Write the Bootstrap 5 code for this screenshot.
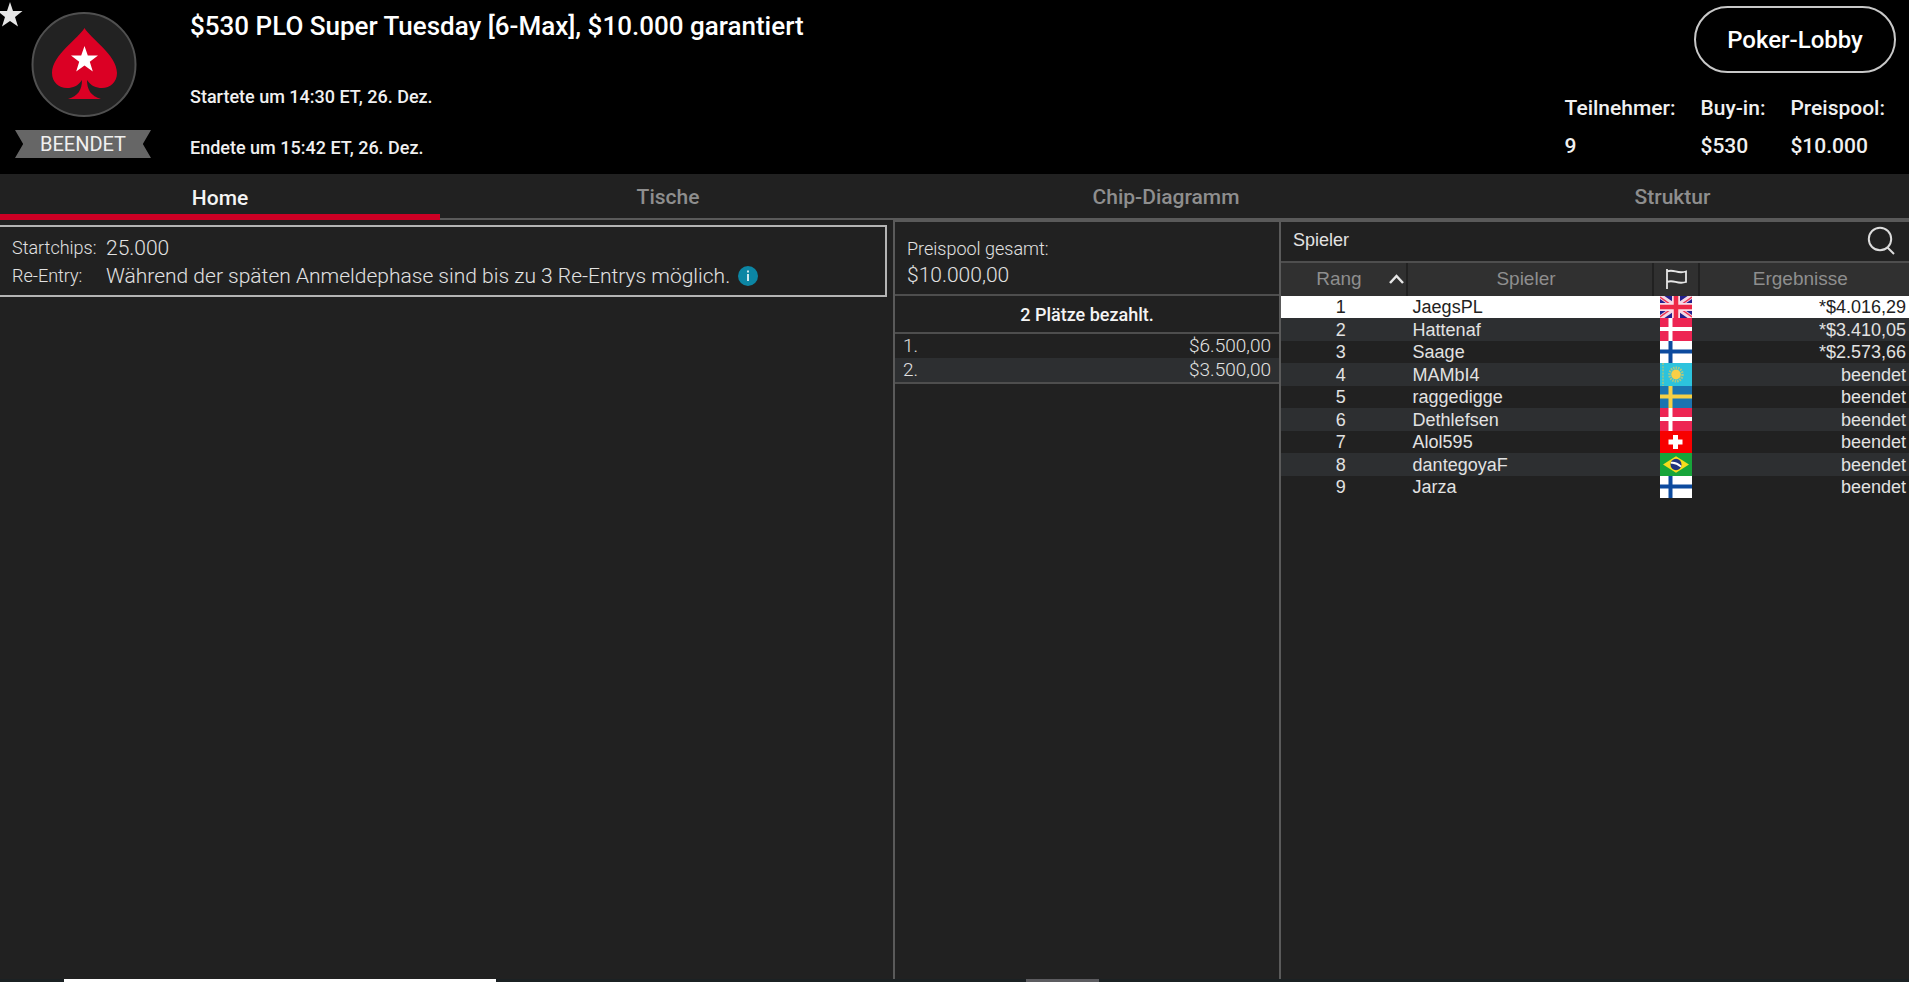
<!DOCTYPE html>
<html lang="de">
<head>
<meta charset="utf-8">
<meta name="viewport" content="width=device-width, initial-scale=1">
<title>Turnierlobby</title>
<link href="https://cdn.jsdelivr.net/npm/bootstrap@5.3.0/dist/css/bootstrap.min.css" rel="stylesheet">
<style>
  body { background: #212121; color: #e2e2e2; font-family: Roboto, sans-serif; }
  svg { display: block; }
  .lobby-head { background: #000; min-height: 174px; }
  .brand { width: 190px; padding: 12px 38px 0 15px; }
  .fav { position: absolute; left: -2px; top: 1px; background: none; }
  .ribbon { width: 136px; height: 28px; line-height: 28px; margin-top: 13px; background: #666;
    clip-path: polygon(0 0, 100% 0, 94% 50%, 100% 100%, 0 100%, 6% 50%); font-size: 20px; color: #f0f0f0; }
  .headline { font-size: 26px; font-weight: 500; line-height: 28px; color: #fff; padding-top: 12px; }
  .times { font-size: 18px; line-height: 24px; font-weight: 500; color: #f0f0f0; }
  .times-start { margin-top: 45px; }
  .times-end { margin-top: 27px; }
  .lobby-btn { width: 202px; height: 67px; margin: 6px 13px 0 0; border: 2px solid #c8c8c8; color: #fff; font-size: 24px; font-weight: 500; }
  .lobby-btn:hover { background: #222; color: #fff; }
  .stats { font-size: 21px; font-weight: 500; line-height: 24px; gap: 25px; margin: 23px 24px 0 0; color: #f0f0f0; }
  .stats dt, .stats dd { font-weight: 500; margin: 0; }
  .stats dd { margin-top: 14px; }
  .tabs { display: grid; grid-template-columns: 440fr 456fr 540fr 473fr; }
  .tabs a { height: 46px; line-height: 46px; border-bottom: 2px solid #5a5a5a; color: #8e8e8e; font-size: 21px; font-weight: 500; }
  .tabs a.active { border-bottom: 6px solid #cd0024; line-height: 48px; color: #f4f4f4; }
  .panels { display: grid; grid-template-columns: 893fr 386fr 630fr; }
  .pane { border-left: 2px solid #5a5a5a; border-top: 2px solid #5a5a5a; }
  .info { margin: 5px 6px 0 0; border: 2px solid #b4b4b4; border-left: 0; padding: 7px 12px 5px;
    font-weight: 300; line-height: 28px; height: 72px; }
  .info dt { width: 94px; font-size: 18px; font-weight: 300; }
  .info dd { font-size: 21px; margin: 0; }
  .pool { font-weight: 300; font-size: 18px; line-height: 27px; padding: 13px 12px 5px; border-bottom: 2px solid #4e4e4e; height: 74px; }
  .pool .sum { font-size: 21px; }
  .paid { font-size: 18px; font-weight: 500; line-height: 37px; height: 38px; border-bottom: 2px solid #4e4e4e; color: #f4f4f4; }
  .prizes { font-size: 19px; font-weight: 300; line-height: 24px; border-bottom: 2px solid #4e4e4e; }
  .prizes td { padding: 0 8px; }
  .prizes tr:nth-child(even) { background: #2d2f31; }
  .arial { font-family: "Liberation Sans", Arial, sans-serif; font-size: 18px; }
  .search-bar { height: 41px; border-bottom: 2px solid #4e4e4e; padding: 0 14px 2px 12px; }
  .players { table-layout: fixed; line-height: 22px; }
  .players th { height: 33px; font-size: 19px; font-weight: 400; color: #8e8e8e; background: #303030; border-right: 2px solid #212121; padding: 0 8px 2px 0; }
  .players th:nth-child(odd) { padding-right: 0; }
  .players th:last-child { border-right: 0; }
  .players td { padding: 0; }
  .players .flag { width: 32px; height: 22px; margin-left: 7px; }
  .players tbody tr { height: 22px; }
  .players tbody tr:nth-child(even) { height: 23px; background: #2d2f31; }
  .players tbody tr:nth-child(even) .flag { height: 23px; }
  .players tbody tr.chosen { background: #fff; color: #222; }
  .players td:first-child { padding-right: 6px; }
  .players td:nth-child(2) { padding-left: 6px; }
  .players td:last-child { padding-right: 3px; }
  .strip { height: 3px; background: #1b2123; display: grid; grid-template-columns: 64fr 432fr 530fr 73fr 810fr; }
</style>
</head>
<body>
<svg width="0" height="0" class="position-absolute" aria-hidden="true">
  <defs>
    <symbol id="dk" viewBox="0 0 32 22" preserveAspectRatio="none"><path fill="#ed2553" d="M0 0h32v22H0z"/><path stroke="#fff" stroke-width="4" d="M10.500 0v22M0 10.500h32"/></symbol>
    <symbol id="fi" viewBox="0 0 32 22" preserveAspectRatio="none"><path fill="#fff" d="M0 0h32v22H0z"/><path stroke="#0c4a9e" stroke-width="4" d="M10.500 0v22M0 10.500h32"/></symbol>
    <symbol id="se" viewBox="0 0 32 22" preserveAspectRatio="none"><path fill="#1b74b0" d="M0 0h32v22H0z"/><path stroke="#f6d044" stroke-width="4" d="M10.500 0v22M0 10.500h32"/></symbol>
    <symbol id="gb" viewBox="0 0 32 22" preserveAspectRatio="none"><path fill="#23208f" d="M0 0h32v22H0z"/><path stroke="#f4d8e4" stroke-width="5" d="M0 0l32 22M32 0L0 22"/><path stroke="#ed3454" stroke-width="1.500" d="M0 1l14 10M18 11l14 10M32 1L18 11M14 11L0 21"/><path stroke="#f8dce6" stroke-width="8" d="M16 0v22M0 11h32"/><path stroke="#ee2846" stroke-width="4.500" d="M16 0v22M0 11h32"/></symbol>
    <symbol id="kz" viewBox="0 0 32 22" preserveAspectRatio="none"><path fill="#2cc3dd" d="M0 0h32v22H0z"/><path stroke="#7fc59a" stroke-width="2" stroke-dasharray="2 1" d="M3 0v22"/><circle cx="16" cy="11" r="6.500" fill="none" stroke="#a9c885" stroke-width="2.500" stroke-dasharray="1.500 1"/><circle cx="16" cy="11" r="4.800" fill="#f9cf45"/></symbol>
    <symbol id="ch" viewBox="0 0 32 22" preserveAspectRatio="none"><path fill="#f80000" d="M0 0h32v22H0z"/><path stroke="#fff" stroke-width="5" d="M15.500 4v14M8.500 11h14"/></symbol>
    <symbol id="br" viewBox="0 0 32 22" preserveAspectRatio="none"><path fill="#17a53a" d="M0 0h32v22H0z"/><path fill="#f5dd1c" d="M16 3l13 8-13 8L3 11z"/><circle cx="16" cy="11" r="5.500" fill="#20357e"/><path d="M11 9.500q5-.8 10 3.500" stroke="#fff" stroke-width="1.800" fill="none"/></symbol>
  </defs>
</svg>
<div class="min-vh-100 d-flex flex-column overflow-hidden position-relative">
  <header class="lobby-head d-flex">
    <button class="fav border-0 p-0" aria-label="Favorit"><svg width="26" height="27" viewBox="0 0 26 27"><path fill="#e6e6e6" d="M12 1l3 9h9.500l-7.500 6 3 9.500-8-5.500-8 5.500 3-9.500-7.500-6H9z"/></svg></button>
    <div class="brand flex-shrink-0">
      <svg class="mx-auto" width="106" height="105" viewBox="0 0 106 105"><circle cx="53" cy="52.500" r="51.500" fill="#222" stroke="#505050" stroke-width="2"/><path fill="#db0024" d="M53.500 16C59 26 86 43 86 61c0 9-7 15-15 15-6 0-11-2-15-8 0 10 4 16 14 19H37c10-3 14-9 14-19-4 6-9 8-15 8-8 0-15-6-15-15 0-18 27-35 32.500-45z"/><path fill="#fff" d="M53.500 34l3.300 9.500h10.200l-8.200 6.200 3 9.800-8.300-6-8.300 6 3-9.800L40 43.500h10.200z"/></svg>
      <div class="ribbon text-center">BEENDET</div>
    </div>
    <div class="flex-grow-1">
      <h1 class="headline m-0">$530 PLO Super Tuesday [6-Max], $10.000 garantiert</h1>
      <p class="times times-start mb-0">Startete um 14:30 ET, 26. Dez.</p>
      <p class="times times-end mb-0">Endete um 15:42 ET, 26. Dez.</p>
    </div>
    <div class="d-flex flex-column align-items-end">
      <button class="btn lobby-btn rounded-pill p-0">Poker-Lobby</button>
      <dl class="stats d-flex">
        <div><dt>Teilnehmer:</dt><dd>9</dd></div>
        <div><dt>Buy-in:</dt><dd>$530</dd></div>
        <div><dt>Preispool:</dt><dd>$10.000</dd></div>
      </dl>
    </div>
  </header>
  <nav class="tabs text-center">
    <a href="#" class="active text-decoration-none">Home</a>
    <a href="#" class="text-decoration-none">Tische</a>
    <a href="#" class="text-decoration-none">Chip-Diagramm</a>
    <a href="#" class="text-decoration-none">Struktur</a>
  </nav>
  <main class="panels flex-grow-1">
    <section>
      <dl class="info">
        <div class="d-flex"><dt>Startchips:</dt><dd>25.000</dd></div>
        <div class="d-flex"><dt>Re-Entry:</dt><dd class="d-flex align-items-center">Während der späten Anmeldephase sind bis zu 3 Re-Entrys möglich.
          <svg class="ms-2" width="20" height="20" viewBox="0 0 20 20"><circle cx="10" cy="10" r="10" fill="#0c86a4"/><path fill="#fff" d="M9.200 4.500h1.600v2H9.200zM9.200 8h1.600v7H9.200z"/></svg></dd></div>
      </dl>
    </section>
    <section class="pane">
      <div class="pool"><div>Preispool gesamt:</div><div class="sum">$10.000,00</div></div>
      <div class="paid text-center">2 Plätze bezahlt.</div>
      <table class="prizes w-100">
        <tbody>
          <tr><td>1.</td><td class="text-end">$6.500,00</td></tr>
          <tr><td>2.</td><td class="text-end">$3.500,00</td></tr>
        </tbody>
      </table>
    </section>
    <section class="pane arial">
      <div class="search-bar d-flex justify-content-between align-items-center">
        <span>Spieler</span>
        <button class="border-0 bg-transparent p-0" aria-label="Suchen"><svg width="28" height="30" viewBox="0 0 28 30" fill="none" stroke="#dcdcdc" stroke-width="2"><circle cx="13" cy="13" r="11.200"/><path d="M20.500 21.500l6.500 6.500"/></svg></button>
      </div>
      <table class="players w-100">
        <colgroup><col style="width:20%"><col style="width:39.300%"><col style="width:7.200%"><col></colgroup>
        <thead>
          <tr>
            <th scope="col"><div class="d-flex align-items-center justify-content-end">Rang<svg class="ms-4 me-0" width="20" height="12" viewBox="0 0 20 12" fill="none" stroke="#e6e6e6" stroke-width="2.500"><path d="M4 10l6.500-7L17 10"/></svg></div></th>
            <th scope="col" class="text-center">Spieler</th>
            <th scope="col"><svg class="mx-auto" role="img" aria-label="Land" width="22" height="22" viewBox="0 0 22 22" fill="none" stroke="#e6e6e6" stroke-width="1.800"><path d="M2 1v20M2 3.500c7-3 10 3 19 0v10.500c-9 3-12-3-19 0"/></svg></th>
            <th scope="col" class="text-center pe-2">Ergebnisse</th>
          </tr>
        </thead>
        <tbody>
          <tr class="chosen"><td class="text-center">1</td><td>JaegsPL</td><td><svg class="flag"><use href="#gb"/></svg></td><td class="text-end">*$4.016,29</td></tr>
          <tr><td class="text-center">2</td><td>Hattenaf</td><td><svg class="flag"><use href="#dk"/></svg></td><td class="text-end">*$3.410,05</td></tr>
          <tr><td class="text-center">3</td><td>Saage</td><td><svg class="flag"><use href="#fi"/></svg></td><td class="text-end">*$2.573,66</td></tr>
          <tr><td class="text-center">4</td><td>MAMbI4</td><td><svg class="flag"><use href="#kz"/></svg></td><td class="text-end">beendet</td></tr>
          <tr><td class="text-center">5</td><td>raggedigge</td><td><svg class="flag"><use href="#se"/></svg></td><td class="text-end">beendet</td></tr>
          <tr><td class="text-center">6</td><td>Dethlefsen</td><td><svg class="flag"><use href="#dk"/></svg></td><td class="text-end">beendet</td></tr>
          <tr><td class="text-center">7</td><td>Alol595</td><td><svg class="flag"><use href="#ch"/></svg></td><td class="text-end">beendet</td></tr>
          <tr><td class="text-center">8</td><td>dantegoyaF</td><td><svg class="flag"><use href="#br"/></svg></td><td class="text-end">beendet</td></tr>
          <tr><td class="text-center">9</td><td>Jarza</td><td><svg class="flag"><use href="#fi"/></svg></td><td class="text-end">beendet</td></tr>
        </tbody>
      </table>
    </section>
  </main>
  <div class="strip"><span></span><span class="bg-white"></span><span></span><span style="background:#5c5c60"></span></div>
</div>
<script src="https://cdn.jsdelivr.net/npm/bootstrap@5.3.0/dist/js/bootstrap.bundle.min.js"></script>
</body>
</html>
